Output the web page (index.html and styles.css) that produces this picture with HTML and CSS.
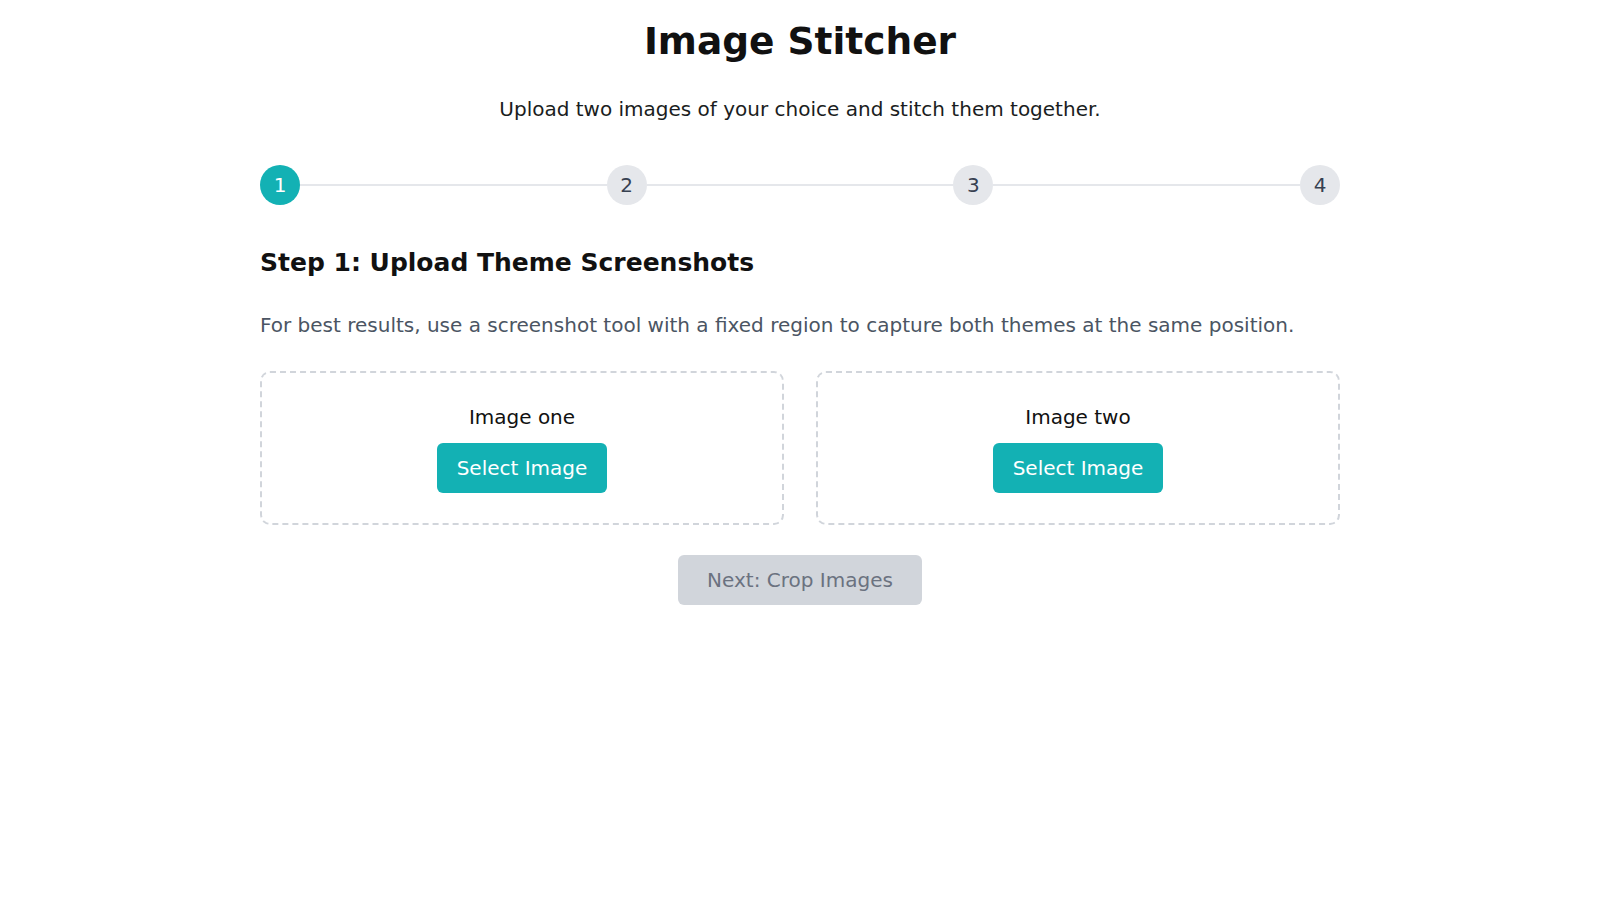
FILE: index.html
```html
<!DOCTYPE html>
<html lang="en">
<head>
<meta charset="utf-8">
<title>Image Stitcher</title>
<link rel="stylesheet" href="styles.css">
</head>
<body>
<main class="page">
  <h1 class="title">Image Stitcher</h1>
  <p class="subtitle">Upload two images of your choice and stitch them together.</p>

  <div class="stepper">
    <div class="step step-active">1</div>
    <div class="connector"></div>
    <div class="step">2</div>
    <div class="connector"></div>
    <div class="step">3</div>
    <div class="connector"></div>
    <div class="step">4</div>
  </div>

  <section class="panel">
    <h2 class="step-title">Step 1: Upload Theme Screenshots</h2>
    <p class="hint">For best results, use a screenshot tool with a fixed region to capture both themes at the same position.</p>

    <div class="dropzones">
      <div class="dropzone">
        <div class="dz-label">Image one</div>
        <button class="btn btn-primary" type="button">Select Image</button>
      </div>
      <div class="dropzone">
        <div class="dz-label">Image two</div>
        <button class="btn btn-primary" type="button">Select Image</button>
      </div>
    </div>

    <div class="actions">
      <button class="btn btn-disabled" type="button" disabled>Next: Crop Images</button>
    </div>
  </section>
</main>
</body>
</html>
```

FILE: styles.css
```css
* {
  box-sizing: border-box;
}

html, body {
  margin: 0;
  padding: 0;
  background: #ffffff;
}

body {
  font-family: "DejaVu Sans", "Liberation Sans", sans-serif;
  color: #111111;
}

.page {
  max-width: 1080px;
  margin: 0 auto;
  padding-top: 21px;
}

.title {
  margin: 0;
  font-size: 37.5px;
  line-height: 40px;
  font-weight: 700;
  text-align: center;
  color: #111111;
}

.subtitle {
  margin: 34px 0 0;
  font-size: 20px;
  line-height: 28px;
  text-align: center;
  color: #1a1d21;
}

.stepper {
  margin-top: 42px;
  display: flex;
  align-items: center;
}

.step {
  width: 40px;
  height: 40px;
  flex: 0 0 40px;
  border-radius: 50%;
  background: #e5e7eb;
  color: #374151;
  font-size: 20px;
  display: flex;
  align-items: center;
  justify-content: center;
}

.step-active {
  background: #13b1b4;
  color: #ffffff;
}

.connector {
  flex: 1;
  height: 2px;
  background: #e5e7eb;
}

.panel {
  margin-top: 42px;
}

.step-title {
  margin: 0;
  font-size: 25px;
  line-height: 32px;
  font-weight: 700;
  color: #111111;
}

.hint {
  margin: 32px 0 0;
  font-size: 20px;
  line-height: 28px;
  color: #4b5563;
}

.dropzones {
  margin-top: 32px;
  display: grid;
  grid-template-columns: 1fr 1fr;
  gap: 32px;
}

.dropzone {
  border: 2px dashed #d1d5db;
  border-radius: 10px;
  padding: 30px 16px 30px;
  display: flex;
  flex-direction: column;
  align-items: center;
}

.dz-label {
  font-size: 20px;
  line-height: 28px;
  color: #111111;
}

.btn {
  font-family: inherit;
  font-size: 20px;
  line-height: 26px;
  border: none;
  border-radius: 6px;
  padding: 12px 20px;
}

.btn-primary {
  margin-top: 12px;
  background: #13b1b4;
  color: #ffffff;
}

.actions {
  margin-top: 30px;
  display: flex;
  justify-content: center;
}

.btn-disabled {
  background: #d1d5db;
  color: #6b7280;
  padding: 12px 29px;
}
```
